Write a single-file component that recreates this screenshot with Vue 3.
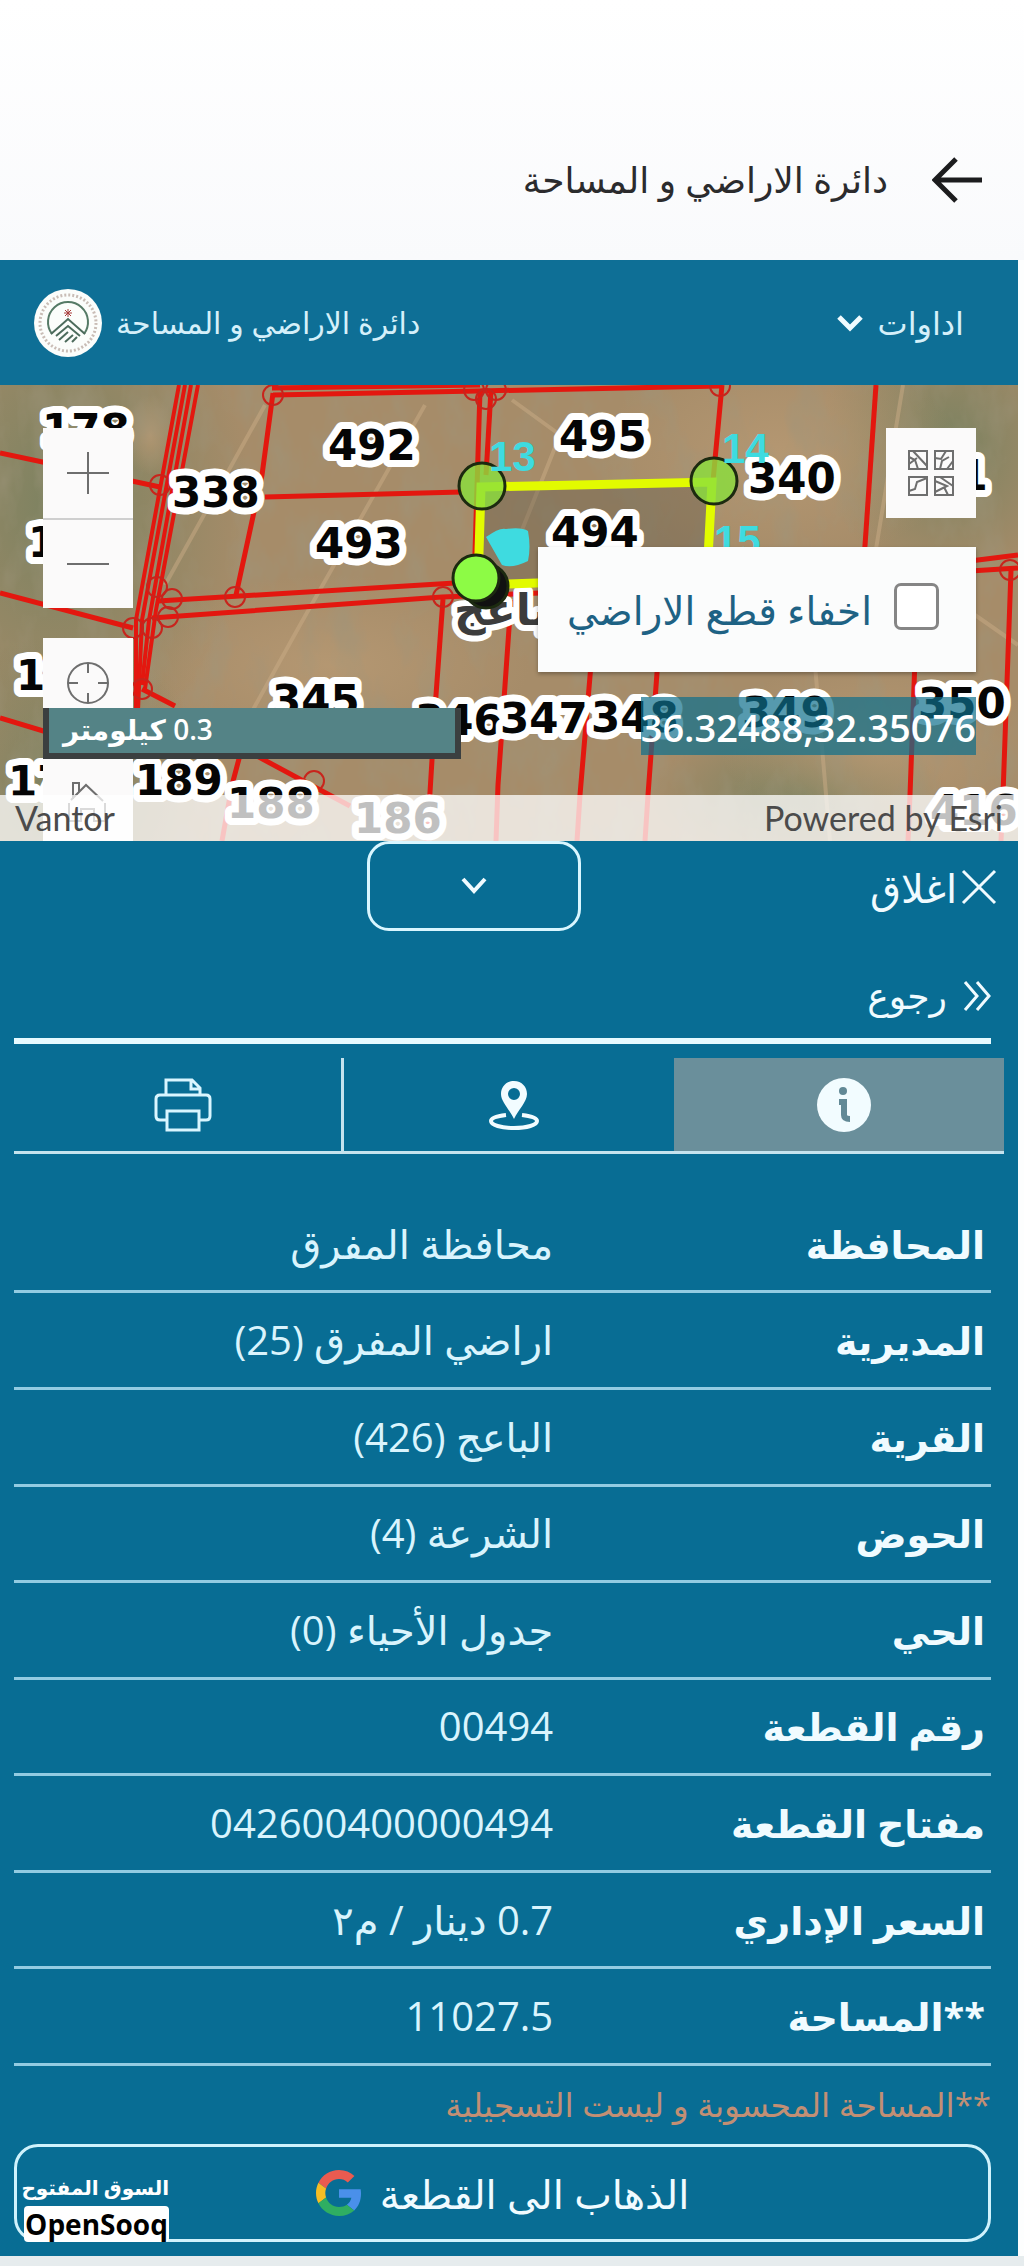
<script setup>
import { ref } from 'vue';

const hideParcels = ref(false);
const panelOpen = ref(true);
const activeTab = ref('info');

const rows = [
    { label: 'المحافظة', value: 'محافظة المفرق' },
    { label: 'المديرية', value: 'اراضي المفرق (25)' },
    { label: 'القرية', value: 'الباعج (426)' },
    { label: 'الحوض', value: 'الشرعة (4)' },
    { label: 'الحي', value: 'جدول الأحياء (0)' },
    { label: 'رقم القطعة', value: '00494' },
    { label: 'مفتاح القطعة', value: '042600400000494' },
    { label: 'السعر الإداري', value: '0.7 دينار / م٢' },
    { label: '**المساحة', value: '11027.5' }
];

// the road on the west side
const road = [
    'M179 0 L136 235 V325', 'M185 0 L142 235 L138 325', 'M191 0 L149 235 L142 300', 'M198 0 L156 225 L145 304'
];

// parcel borders, in map units
const borders = [
    'M0 68 L160 102', 'M265 112 L462 107', 'M0 208 L133 243',
    'M272 3 L480 0', 'M273 10 L478 6 L720 1', 'M273 8 L262 90 L236 210',
    'M480 5 L474 200', 'M491 5 L486 90',
    'M158 216 L455 198', 'M152 233 L442 212 L540 208',
    'M443 214 L436 310 L427 456', 'M511 215 L498 400 L496 456',
    'M596 220 L580 410 L577 456', 'M662 220 L648 410 L645 456', 'M917 220 L910 410 L908 456',
    'M722 0 L713 96', 'M876 0 L864 175', 'M970 176 L1018 170', 'M970 186 L1018 183', 'M1011 185 L1003 410 L1001 456',
    'M0 333 L50 348', 'M142 304 L175 321', 'M255 370 L350 421', 'M240 370 L232 400 L222 456'
];

const nodes = [
    [273, 10], [474, 5], [486, 14], [496, 5], [720, 1], [160, 100], [157, 202], [172, 214],
    [235, 212], [168, 232], [133, 243], [152, 243], [142, 304], [443, 212], [314, 396], [1010, 185]
];

const labels = [
    { t: '178', x: 42, y: 59 }, { t: '492', x: 328, y: 75 }, { t: '495', x: 559, y: 66 },
    { t: '338', x: 172, y: 122 }, { t: '340', x: 748, y: 108 }, { t: '361', x: 900, y: 105 },
    { t: '493', x: 315, y: 173 }, { t: '494', x: 551, y: 162 }, { t: '18', x: 28, y: 172 },
    { t: '18', x: 16, y: 305 }, { t: '345', x: 272, y: 330 }, { t: '346', x: 415, y: 350 },
    { t: '347', x: 500, y: 348 }, { t: '348', x: 591, y: 347 }, { t: '349', x: 742, y: 342 },
    { t: '350', x: 918, y: 333 }, { t: '17', x: 8, y: 411 }, { t: '189', x: 135, y: 410 },
    { t: '188', x: 227, y: 433 }, { t: '186', x: 354, y: 448 }, { t: '416', x: 930, y: 440 }
];

const vertices = [
    { t: '13', x: 489, y: 86 }, { t: '14', x: 722, y: 78 }, { t: '15', x: 714, y: 170 }
];
</script>

<template>
    <div class="page" dir="rtl">
        <header class="app-header">
            <button class="back" aria-label="رجوع">
                <svg viewBox="0 0 50 46" width="50" height="46">
                    <path d="M50 23H4M24 2L3 23l21 21" />
                </svg>
            </button>
            <h1>دائرة الاراضي و المساحة</h1>
        </header>

        <div class="site">
            <nav class="toolbar">
                <button class="tools">
                    <span>اداوات</span>
                    <svg viewBox="0 0 28 20" width="28" height="20">
                        <path d="M3 4l11 11L25 4" />
                    </svg>
                </button>
                <a class="brand" href="#">
                    <span>دائرة الاراضي و المساحة</span>
                    <svg viewBox="0 0 68 68" width="68" height="68">
                        <circle cx="34" cy="34" r="34" fill="#fbfdfb" />
                        <circle cx="34" cy="34" r="28" fill="none" stroke="#c9bdb6" stroke-width="3" stroke-dasharray="2 2" />
                        <path d="M18 45A20 20 0 1 1 50 45" fill="none" stroke="#557a66" stroke-width="2" />
                        <path d="M17 45l17-15 17 15M22 47l12-10 12 10M25 51l9-8M31 53l8-7M38 53l5-5" fill="none" stroke="#4c6b5c" stroke-width="2" />
                        <path d="M34 20v8M30 24h8M31 21l6 6M37 21l-6 6" stroke="#a83a3a" stroke-width="1" />
                    </svg>
                </a>
            </nav>

            <section class="map">
                <svg class="tiles" viewBox="0 0 1018 456" preserveAspectRatio="xMidYMid slice">
                    <defs>
                        <radialGradient id="green">
                            <stop offset="0" stop-color="#74805f" stop-opacity=".85" />
                            <stop offset="1" stop-color="#74805f" stop-opacity="0" />
                        </radialGradient>
                        <radialGradient id="sand">
                            <stop offset="0" stop-color="#b89a74" stop-opacity=".8" />
                            <stop offset="1" stop-color="#b89a74" stop-opacity="0" />
                        </radialGradient>
                        <filter id="grain" x="0" y="0" width="100%" height="100%">
                            <feTurbulence type="fractalNoise" baseFrequency="0.03 0.015" numOctaves="4" seed="6" />
                            <feColorMatrix values="0 0 0 0 .34  0 0 0 0 .3  0 0 0 0 .2  1.2 0 0 0 -.52" />
                        </filter>
                    </defs>
                    <rect width="1018" height="456" fill="#a68c69" />
                    <ellipse cx="60" cy="120" rx="190" ry="260" fill="url(#green)" />
                    <ellipse cx="60" cy="400" rx="150" ry="150" fill="url(#green)" />
                    <ellipse cx="950" cy="60" rx="130" ry="140" fill="url(#green)" />
                    <ellipse cx="800" cy="410" rx="150" ry="70" fill="url(#green)" />
                    <ellipse cx="150" cy="50" rx="26" ry="40" fill="url(#sand)" />
                    <ellipse cx="780" cy="70" rx="180" ry="110" fill="url(#sand)" />
                    <ellipse cx="880" cy="360" rx="160" ry="90" fill="url(#sand)" />
                    <ellipse cx="330" cy="280" rx="200" ry="90" fill="url(#sand)" />
                    <rect width="1018" height="456" filter="url(#grain)" />
                    <path class="track" d="M265 20L165 200M425 20L300 240 250 330M512 15L560 50 520 150M903 0L875 170M975 230L1018 260M815 280L830 456" />
                    <path d="M482 102L712 97 707 200 478 196z" fill="#5c5548" fill-opacity=".35" />
                    <path v-for="d in road" :key="d" class="border road" :d="d" />
                    <path v-for="d in borders" :key="d" class="border" :d="d" />
                    <circle v-for="(n, i) in nodes" :key="i" class="node" :cx="n[0]" :cy="n[1]" r="10" />
                    <text v-for="(l, i) in labels" :key="'l' + i" class="parcel" :x="l.x" :y="l.y">{{ l.t }}</text>
                    <text class="village" x="454" y="240">الباعج</text>
                    <path class="selected" d="M481 102L712 97 707 192 478 200z" />
                    <circle class="vertex dark" cx="486" cy="201" r="22" />
                    <circle class="vertex" cx="482" cy="101" r="23" />
                    <circle class="vertex" cx="714" cy="96" r="23" />
                    <path d="M486 152q14-10 20-8 16-2 22 2 3 16 0 30-16 8-26 4z" fill="#3edbe0" />
                    <circle class="vertex solid" cx="476" cy="193" r="23" />
                    <text v-for="v in vertices" :key="v.t" class="vertex-no" :x="v.x" :y="v.y">{{ v.t }}</text>
                </svg>

                <div class="zoom">
                    <button aria-label="تكبير">
                        <svg viewBox="0 0 42 42" width="42" height="42"><path d="M0 21h42M21 0v42" /></svg>
                    </button>
                    <button aria-label="تصغير">
                        <svg viewBox="0 0 42 42" width="42" height="42"><path d="M0 21h42" /></svg>
                    </button>
                </div>
                <button class="map-btn locate" aria-label="موقعي">
                    <svg viewBox="0 0 42 42" width="42" height="42">
                        <circle cx="21" cy="21" r="20" />
                        <path d="M21 1v10M21 31v10M1 21h10M31 21h10" />
                    </svg>
                </button>
                <button class="map-btn home" aria-label="الرئيسية">
                    <svg viewBox="0 0 42 42" width="42" height="42">
                        <path d="M6 18V2h6v9M4 19L19 4l17 16M2 22v18h12V28h13v12h11V22" />
                    </svg>
                </button>
                <button class="map-btn basemap" aria-label="الخرائط">
                    <svg viewBox="0 0 48 48" width="48" height="48">
                        <path d="M2 2h18v18H2zM28 2h18v18H28zM2 28h18v18H2zM28 28h18v18H28z" />
                        <path d="M2 8l6 3 3 9M6 2l14 15M2 15l8-6M28 9l6 1 5-8M33 20l2-8 7-4M40 20l6-8M2 42l6-2 2-7 10-4M28 32l12 5-12 6M33 28l13 9M37 38l4 8" />
                    </svg>
                </button>

                <label class="layer-toggle">
                    <input v-model="hideParcels" type="checkbox">
                    <span>اخفاء قطع الاراضي</span>
                </label>

                <div class="scale">0.3 كيلومتر</div>
                <div class="coords" dir="ltr">36.32488,32.35076</div>
                <div class="attribution" dir="ltr">
                    <span>Vantor</span>
                    <span>Powered by Esri</span>
                </div>
            </section>

            <section class="panel">
                <button class="collapse" aria-label="طي" @click="panelOpen = !panelOpen">
                    <svg viewBox="0 0 28 20" width="28" height="20"><path d="M3 3l11 12L25 3" /></svg>
                </button>
                <button class="close">
                    <svg viewBox="0 0 36 36" width="36" height="36"><path d="M2 2l32 32M34 2L2 34" /></svg>
                    <span>اغلاق</span>
                </button>

                <template v-if="panelOpen">
                    <button class="return">
                        <svg viewBox="0 0 28 32" width="28" height="32"><path d="M2 2l12 14L2 30M14 2l12 14-12 14" /></svg>
                        <span>رجوع</span>
                    </button>

                    <div class="tabs">
                        <button :class="{ active: activeTab === 'info' }" aria-label="معلومات" @click="activeTab = 'info'">
                            <svg viewBox="0 0 54 54" width="54" height="54">
                                <circle cx="27" cy="27" r="27" fill="#f2fcff" />
                                <circle cx="26" cy="13" r="4" fill="#628996" />
                                <path d="M22 24h5v13q0 4 6 4" fill="none" stroke="#628996" stroke-width="6" />
                            </svg>
                        </button>
                        <button :class="{ active: activeTab === 'place' }" aria-label="الموقع" @click="activeTab = 'place'">
                            <svg viewBox="0 0 50 50" width="50" height="50">
                                <path d="M25 1c-8 0-13 6-13 13 0 8 9 16 13 25 4-9 13-17 13-25 0-7-5-13-13-13zm0 7a6 6 0 1 1 0 12 6 6 0 0 1 0-12z" fill="#f2fcff" fill-rule="evenodd" />
                                <path d="M17 35c-9 1-15 3-15 6 0 4 10 7 23 7s23-3 23-7c0-3-6-5-15-6" fill="none" stroke="#f2fcff" stroke-width="4" />
                            </svg>
                        </button>
                        <button :class="{ active: activeTab === 'print' }" aria-label="طباعة" @click="activeTab = 'print'">
                            <svg viewBox="0 0 58 54" width="58" height="54">
                                <path d="M12 17V2h26l8 8v7M37 2v9h9M13 42H6q-4 0-4-4V21q0-4 4-4h46q4 0 4 4v17q0 4-4 4h-7M13 33h32v19H13z" fill="none" stroke="#d9f6ff" stroke-width="3" />
                            </svg>
                        </button>
                    </div>

                    <table class="details">
                        <tbody>
                            <tr v-for="row in rows" :key="row.label">
                                <th scope="row">{{ row.label }}</th>
                                <td>{{ row.value }}</td>
                            </tr>
                        </tbody>
                    </table>

                    <p class="note">**المساحة المحسوبة و ليست التسجيلية</p>

                    <button class="goto">
                        <span>الذهاب الى القطعة</span>
                        <svg viewBox="0 0 48 48" width="46" height="46">
                            <path fill="#ea5b50" d="M24 9.500c3.500 0 6.700 1.200 9.200 3.600l6.900-6.900C35.900 2.400 30.500 0 24 0 14.600 0 6.500 5.400 2.600 13.200l8 6.200C12.400 13.700 17.700 9.500 24 9.500z" />
                            <path fill="#4a90ea" d="M47 24.500c0-1.600-.2-3.100-.4-4.500H24v9h12.900c-.6 3-2.200 5.500-4.700 7.200l7.700 6C44.400 38 47 31.800 47 24.500z" />
                            <path fill="#f5bd25" d="M10.500 28.600c-.5-1.500-.8-3-.8-4.600s.3-3.100.8-4.600l-8-6.200C.9 16.500 0 20.100 0 24s.9 7.500 2.600 10.800z" />
                            <path fill="#2fae62" d="M24 48c6.500 0 11.900-2.100 15.900-5.800l-7.700-6c-2.200 1.500-4.900 2.300-8.200 2.300-6.300 0-11.600-4.200-13.500-9.900l-8 6.200C6.500 42.600 14.600 48 24 48z" />
                        </svg>
                    </button>
                </template>

                <div class="watermark">
                    <strong>السوق المفتوح</strong>
                    <b dir="ltr">OpenSooq</b>
                </div>
            </section>
        </div>
    </div>
</template>

<style>
body {
    background: #e6ecee;
}
</style>

<style scoped>
.page {
    background: #fdfefe;
    color: #f0fbff;
    font-family: 'Open Sans', 'DejaVu Sans', sans-serif;
    font-size: 36px;
}

button {
    margin: 0;
    padding: 0;
    border: 0;
    background: none;
    color: inherit;
    font: inherit;
    cursor: pointer;
}

svg {
    display: block;
    flex: none;
}

.app-header {
    display: flex;
    align-items: center;
    gap: 44px;
    padding: 150px 42px 50px;
    background: linear-gradient(#fff, #f9fafc);
}

.back path {
    fill: none;
    stroke: #1c1c1e;
    stroke-width: 5;
}

h1 {
    margin: 0;
    color: #2b2b2d;
    font-size: 36px;
    font-weight: 400;
    line-height: 60px;
}

.site {
    margin-right: 6px;
}

.toolbar {
    display: flex;
    align-items: center;
    justify-content: space-between;
    height: 125px;
    padding: 0 54px 0 34px;
    background: #0e6f96;
}

.tools,
.brand {
    display: flex;
    align-items: center;
    gap: 14px;
    color: #d5f0fa;
    font-size: 30px;
    text-decoration: none;
}

.tools {
    font-size: 32px;
}

.tools path {
    fill: none;
    stroke: #f0fbff;
    stroke-width: 5;
}

.map {
    position: relative;
    height: 456px;
    overflow: hidden;
    background: #a68c69;
}

.tiles {
    width: 100%;
    height: 100%;
    direction: ltr;
}

.track {
    fill: none;
    stroke: #c9ac86;
    stroke-width: 4;
    opacity: .5;
}

.border {
    fill: none;
    stroke: #e3170f;
    stroke-width: 5;
}

.road {
    stroke-width: 4;
}

.node {
    fill: none;
    stroke: #c8241c;
    stroke-width: 2;
}

.parcel {
    fill: #050505;
    stroke: #fff;
    stroke-width: 14;
    stroke-linejoin: round;
    paint-order: stroke;
    font: 700 42px 'DejaVu Sans', sans-serif;
}

.village {
    fill: #3c3c3c;
    stroke: #fff;
    stroke-width: 12;
    stroke-linejoin: round;
    paint-order: stroke;
    font: 700 44px 'DejaVu Sans', sans-serif;
}

.selected {
    fill: none;
    stroke: #e2fb00;
    stroke-width: 9;
}

.vertex {
    fill: #8be03c;
    fill-opacity: .8;
    stroke: #1c2a10;
    stroke-width: 3;
}

.vertex.dark {
    fill: #111;
    fill-opacity: 1;
}

.vertex.solid {
    fill: #8dfb45;
    fill-opacity: 1;
}

.vertex-no {
    fill: #3edbe0;
    font: 700 42px 'Liberation Sans', sans-serif;
}

.zoom,
.map-btn {
    position: absolute;
    left: 43px;
    width: 90px;
    background: #fbfafa;
}

.zoom {
    top: 43px;
}

.zoom button,
.map-btn {
    display: flex;
    align-items: center;
    justify-content: center;
    width: 90px;
    height: 90px;
}

.zoom button + button {
    border-top: 2px solid #cfcfcf;
}

.zoom path,
.map-btn path,
.map-btn circle {
    fill: none;
    stroke: #6e6e6e;
    stroke-width: 2;
}

.locate {
    top: 253px;
}

.home {
    top: 372px;
}

.basemap {
    top: 43px;
    right: 42px;
    left: auto;
}

.layer-toggle {
    position: absolute;
    top: 162px;
    right: 42px;
    display: flex;
    align-items: center;
    gap: 22px;
    width: 438px;
    height: 125px;
    padding: 0 37px;
    box-sizing: border-box;
    background: #fbfcfc;
    color: #1e6284;
    box-shadow: 0 2px 4px rgba(0, 0, 0, .3);
    font-size: 39px;
    white-space: nowrap;
}

.layer-toggle input {
    flex: none;
    width: 45px;
    height: 47px;
    margin: 0 0 6px;
    appearance: none;
    border: 3px solid #858585;
    border-radius: 7px;
    background: #fff;
}

.layer-toggle input:checked {
    background: #0e6f96;
}

.scale {
    position: absolute;
    top: 323px;
    left: 43px;
    width: 418px;
    height: 51px;
    padding-left: 14px;
    box-sizing: border-box;
    border: 6px solid #3b3f40;
    border-top: 0;
    background: #548386;
    color: #fff;
    font-size: 28px;
    font-weight: 600;
    line-height: 42px;
    text-align: left;
}

.coords {
    position: absolute;
    top: 312px;
    right: 42px;
    height: 58px;
    background: rgba(14, 111, 140, .7);
    color: #fff;
    font-size: 38px;
    font-weight: 600;
    line-height: 60px;
}

.attribution {
    position: absolute;
    right: 0;
    bottom: 0;
    left: 0;
    display: flex;
    justify-content: space-between;
    padding: 0 15px;
    background: rgba(255, 255, 255, .75);
    color: #4b4b4b;
    font-family: Lato, sans-serif;
    font-size: 34px;
    line-height: 46px;
}

.panel {
    position: relative;
    padding: 0 27px 14px 14px;
    background: #086d94;
}

.collapse {
    position: absolute;
    top: 0;
    left: 367px;
    display: flex;
    align-items: center;
    justify-content: center;
    width: 214px;
    height: 90px;
    border: 3px solid #d9f6ff;
    border-radius: 22px;
}

.collapse path,
.close path,
.return path {
    fill: none;
    stroke: #f0fbff;
    stroke-width: 3;
}

.collapse path {
    stroke-width: 4;
}

.close,
.return {
    display: flex;
    align-items: center;
    height: 92px;
}

.close {
    gap: 4px;
    margin-right: -6px;
    font-size: 40px;
}

.return {
    gap: 16px;
    width: 100%;
    height: 111px;
    padding-top: 20px;
    border-bottom: 6px solid #e6faff;
}

.tabs {
    display: grid;
    grid-template-columns: repeat(3, 1fr);
    margin: 14px -13px 44px 0;
    border-bottom: 3px solid #c5e3ee;
}

.tabs button {
    display: flex;
    align-items: center;
    justify-content: center;
    height: 93px;
    padding-left: 10px;
}

.tabs button:last-child {
    border-right: 3px solid #c5e3ee;
}

.tabs .active {
    background: #6a8f9b;
}

.details {
    width: 100%;
    height: 868px;
    border-collapse: collapse;
    table-layout: fixed;
}

.details th,
.details td {
    padding: 0 8px;
    border-bottom: 3px solid #93cbe2;
    font-size: 38px;
    line-height: 52px;
    text-align: right;
    white-space: nowrap;
}

.details th {
    width: 44%;
    box-sizing: border-box;
    padding-right: 6px;
}

.details td {
    color: #d9f4fd;
    font-size: 40px;
}

.note {
    margin: 0;
    color: #c28f74;
    font-size: 33px;
    line-height: 78px;
    white-space: nowrap;
}

.goto {
    display: flex;
    align-items: center;
    justify-content: center;
    gap: 18px;
    width: 100%;
    height: 98px;
    border: 3px solid #d0f2fc;
    border-radius: 24px;
    font-size: 40px;
}

.watermark {
    position: absolute;
    bottom: 14px;
    left: 24px;
    width: 145px;
    color: #fff;
    font-size: 28px;
    line-height: 36px;
    text-align: center;
    white-space: nowrap;
}

.watermark strong,
.watermark b {
    display: block;
}

.watermark strong {
    font-size: 20px;
}

.watermark b {
    border-radius: 4px;
    background: #fff;
    color: #000;
}
</style>
